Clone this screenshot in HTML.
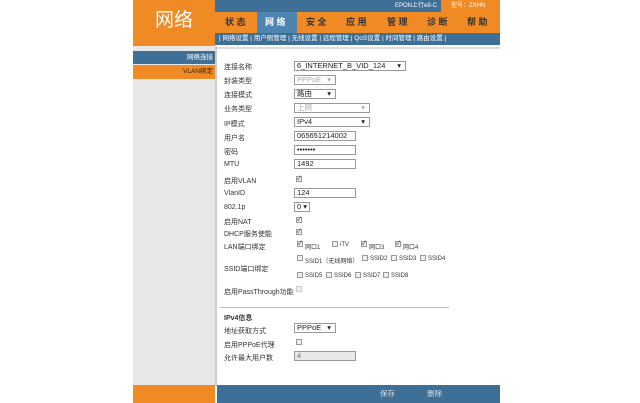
<!DOCTYPE html>
<html><head><meta charset="utf-8"><style>
body{margin:0;width:640px;height:403px;background:#fff;position:relative;overflow:hidden;font-family:"Liberation Sans","Noto Sans CJK SC",sans-serif;}
div{position:absolute;box-sizing:border-box}
.l{font-size:7px;color:#333;left:224px}
.inp{border:1px solid #999;background:#fff;font-size:7.5px;color:#222;height:10px;line-height:8px;padding-left:2px;left:294px}
.cb{width:6px;height:6px;border:1px solid #999;background:#eee;font-size:6px;line-height:5px;text-align:center;color:#333}
.t{font-size:6px;color:#333}
</style></head><body>
<div style="left:133px;top:0;width:82px;height:46px;background:#f08a24;color:#fff;font-size:19px;text-align:center;line-height:42px">网络</div>
<div style="left:133px;top:46px;width:82px;height:340px;background:#e8e8e8"></div>
<div style="left:133px;top:51px;width:82px;height:13px;background:#3e6f96;color:#fff;font-size:6.5px;text-align:right;padding-right:2px;line-height:13px">网络连接</div>
<div style="left:133px;top:65px;width:82px;height:14px;background:#f08a24;color:#222;font-size:6.5px;text-align:right;padding-right:2px;line-height:14px">VLAN绑定</div>
<div style="left:215px;top:0;width:226px;height:12px;background:#3e6f96;color:#fff;font-size:6px;text-align:right;padding-right:4px;line-height:12px">EPON上行e8-C</div>
<div style="left:441px;top:0;width:59px;height:12px;background:#f08a24;color:#fff;font-size:6px;line-height:12px;padding-left:10px">型号：ZXHN F650A</div>
<div style="left:215px;top:12px;width:285px;height:21px;background:#f08a24"></div>
<div style="left:257px;top:12px;width:40px;height:21px;background:#4d84b0"></div>
<div style="left:215px;top:12px;width:285px;height:21px;font-size:9px;color:#333;line-height:21px;font-weight:bold">
<span style="position:absolute;left:10px">状 态</span><span style="position:absolute;left:50px;color:#fff">网 络</span><span style="position:absolute;left:91px">安 全</span><span style="position:absolute;left:131px">应 用</span><span style="position:absolute;left:172px">管 理</span><span style="position:absolute;left:212px">诊 断</span><span style="position:absolute;left:252px">帮 助</span></div>
<div style="left:215px;top:33px;width:285px;height:12px;background:#3e6f96;color:#fff;font-size:6.5px;line-height:12px;padding-left:4px;white-space:nowrap">| 网络设置 | 用户侧管理 | 无线设置 | 远程管理 | QoS设置 | 时间管理 | 路由设置 |</div>
<div style="left:215px;top:46px;width:2px;height:340px;background:#ccc"></div>
<div style="left:217px;top:47px;width:283px;height:2px;background:#ddd"></div>
<div style="left:133px;top:385px;width:82px;height:18px;background:#f08a24"></div>
<div style="left:217px;top:385px;width:283px;height:18px;background:#3e6f96;color:#ddd;font-size:7.5px;line-height:18px"><span style="position:absolute;left:163px">保存</span><span style="position:absolute;left:210px">删除</span></div>

<div class="l" style="top:62px">连接名称</div><div class="inp" style="top:61px;width:112px">6_INTERNET_B_VID_124<span style="position:absolute;right:4px">▾</span></div>
<div class="l" style="top:76px">封装类型</div><div class="inp" style="top:75px;width:42px;color:#aaa">PPPoE<span style="position:absolute;right:4px">▾</span></div>
<div class="l" style="top:90px">连接模式</div><div class="inp" style="top:89px;width:42px">路由<span style="position:absolute;right:4px">▾</span></div>
<div class="l" style="top:104px">业务类型</div><div class="inp" style="top:103px;width:76px;color:#aaa">上网<span style="position:absolute;right:4px">▾</span></div>
<div class="l" style="top:119px">IP模式</div><div class="inp" style="top:117px;width:76px">IPv4<span style="position:absolute;right:4px">▾</span></div>
<div class="l" style="top:133px">用户名</div><div class="inp" style="top:131px;width:62px">065651214002</div>
<div class="l" style="top:147px">密码</div><div class="inp" style="top:145px;width:62px">•••••••</div>
<div class="l" style="top:161px">MTU</div><div class="inp" style="top:159px;width:62px">1492</div>
<div class="l" style="top:176px">启用VLAN</div><div class="cb" style="left:296px;top:176px">✓</div>
<div class="l" style="top:190px">VlanID</div><div class="inp" style="top:188px;width:62px">124</div>
<div class="l" style="top:204px">802.1p</div><div class="inp" style="top:202px;width:16px">0 ▾</div>
<div class="l" style="top:217px">启用NAT</div><div class="cb" style="left:296px;top:217px">✓</div>
<div class="l" style="top:229px">DHCP服务使能</div><div class="cb" style="left:296px;top:229px">✓</div>
<div class="l" style="top:242px">LAN端口绑定</div>
<div class="cb" style="left:297px;top:241px">✓</div><div class="t" style="left:305px;top:242px">网口1</div>
<div class="cb" style="left:332px;top:241px"></div><div class="t" style="left:340px;top:242px">iTV</div>
<div class="cb" style="left:361px;top:241px">✓</div><div class="t" style="left:369px;top:242px">网口3</div>
<div class="cb" style="left:395px;top:241px">✓</div><div class="t" style="left:403px;top:242px">网口4</div>
<div class="l" style="top:264px">SSID端口绑定</div>
<div class="cb" style="left:297px;top:255px"></div><div class="t" style="left:305px;top:256px">SSID1（无线网络）</div>
<div class="cb" style="left:362px;top:255px"></div><div class="t" style="left:370px;top:256px">SSID2</div>
<div class="cb" style="left:391px;top:255px"></div><div class="t" style="left:399px;top:256px">SSID3</div>
<div class="cb" style="left:420px;top:255px"></div><div class="t" style="left:428px;top:256px">SSID4</div>
<div class="cb" style="left:297px;top:272px"></div><div class="t" style="left:305px;top:273px">SSID5</div>
<div class="cb" style="left:326px;top:272px"></div><div class="t" style="left:334px;top:273px">SSID6</div>
<div class="cb" style="left:355px;top:272px"></div><div class="t" style="left:363px;top:273px">SSID7</div>
<div class="cb" style="left:383px;top:272px"></div><div class="t" style="left:391px;top:273px">SSID8</div>
<div class="l" style="top:287px">启用PassThrough功能</div><div class="cb" style="left:296px;top:286px;border-color:#ccc"></div>
<div style="left:220px;top:307px;width:229px;height:1px;background:#bbb"></div>
<div class="l" style="top:313px;font-weight:bold">IPv4信息</div>
<div class="l" style="top:326px">地址获取方式</div><div class="inp" style="top:323px;width:42px">PPPoE<span style="position:absolute;right:4px">▾</span></div>
<div class="l" style="top:340px">启用PPPoE代理</div><div class="cb" style="left:296px;top:339px"></div>
<div class="l" style="top:353px">允许最大用户数</div><div class="inp" style="top:351px;width:62px;background:#e8e8e8;color:#777">4</div>
</body></html>
